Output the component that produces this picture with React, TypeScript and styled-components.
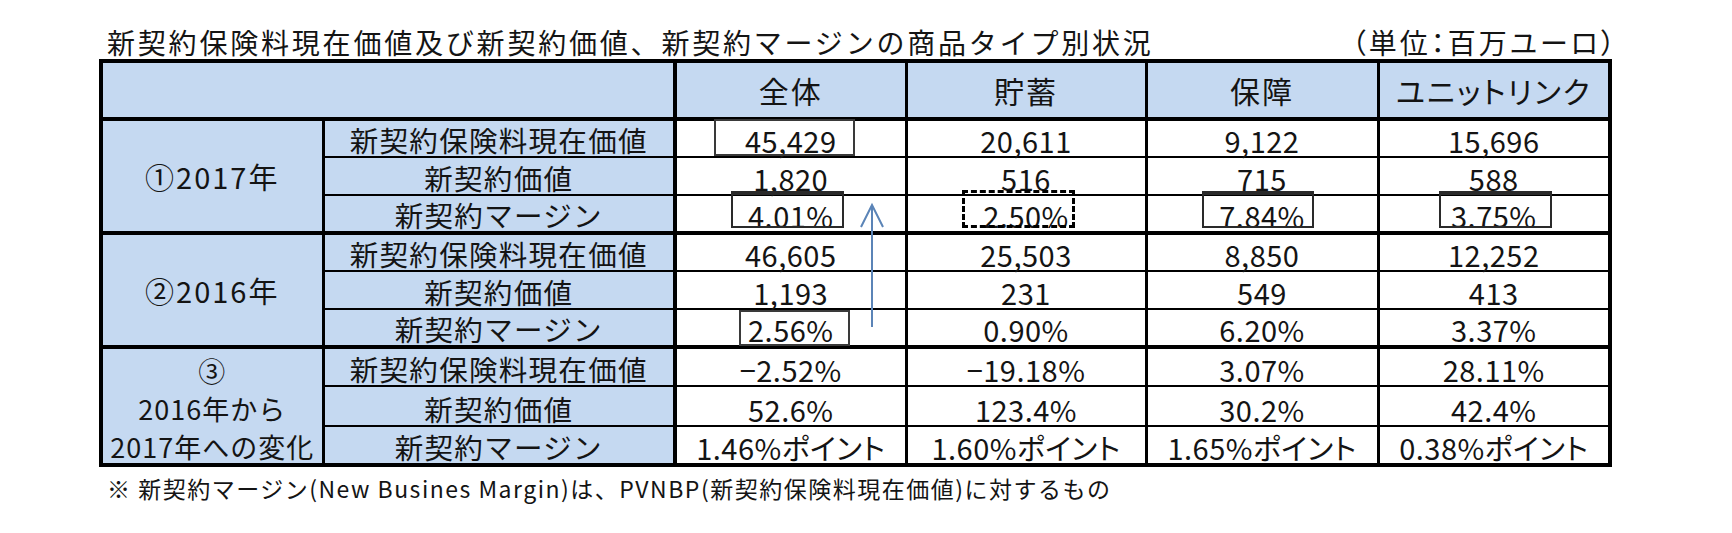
import React from 'react';
import styled, { createGlobalStyle, css } from 'styled-components';

const Global = createGlobalStyle`
  html, body { margin: 0; padding: 0; background: #ffffff; }
  body {
    font-family: "Noto Sans CJK JP", "Noto Sans", sans-serif;
    color: #141414;
  }
`;

const Page = styled.div`
  width: 1732px;
  height: 533px;
  box-sizing: border-box;
  padding: 26px 0 0 99px;
`;

const Sheet = styled.div`
  width: 1513px;
  display: flex;
  flex-direction: column;
`;

const TitleRow = styled.div`
  display: flex;
  justify-content: space-between;
  align-items: flex-end;
  height: 33px;
  padding: 0 0 0 8px;
  margin-right: -6px;
  font-size: 28px;
  line-height: 34px;
  letter-spacing: 2.8px;
  white-space: nowrap;
`;

const Unit = styled.span`
  letter-spacing: 3px;
  font-feature-settings: "palt";
`;

const TableWrap = styled.div`
  position: relative;
`;

const Table = styled.table`
  width: 1513px;
  border-collapse: collapse;
  table-layout: fixed;
  border: 4px solid #000;
`;

const blue = '#c5d9f1';

const HeadCell = styled.th<{ $thick?: boolean }>`
  background: ${blue};
  font-weight: 400;
  font-size: 30px;
  letter-spacing: 2px;
  font-feature-settings: "palt";
  height: 54px;
  padding: 0;
  text-align: center;
  vertical-align: middle;
  border: 3px solid #000;
  border-bottom-width: 4px;
  ${(p) => p.$thick && css`border-right-width: 4px;`}
  white-space: nowrap;
`;

const BodyRow = styled.tr<{ $groupStart?: boolean }>`
  height: 38px;
  & > td {
    border-top: ${(p) => (p.$groupStart ? '4px' : '2px')} solid #000;
  }
`;

const GroupCell = styled.td`
  background: ${blue};
  border-right: 3px solid #000;
  text-align: center;
  vertical-align: middle;
  font-size: 29px;
  letter-spacing: 2px;
  line-height: 34px;
  padding: 0;
  white-space: nowrap;
`;

const GroupLines = styled.div`
  display: grid;
  grid-auto-rows: 38px;
  align-items: end;
  font-size: 27px;
  letter-spacing: 1px;
  line-height: 32px;
`;

const LabelCell = styled.td`
  background: ${blue};
  border-right: 4px solid #000;
  border-bottom: 2px solid #000;
  text-align: center;
  vertical-align: bottom;
  font-size: 28.5px;
  letter-spacing: 1.3px;
  line-height: 32px;
  padding: 0;
  white-space: nowrap;
`;

const DataCell = styled.td`
  background: #fff;
  border-left: 3px solid #000;
  border-right: 3px solid #000;
  border-bottom: 2px solid #000;
  text-align: center;
  vertical-align: bottom;
  font-size: 29px;
  letter-spacing: 0.5px;
  font-feature-settings: "palt";
  line-height: 32px;
  padding: 0;
  white-space: nowrap;
`;

const Annotation = styled.div<{ $kind: 'thin' | 'topThick' | 'dashed' }>`
  position: absolute;
  box-sizing: border-box;
  pointer-events: none;
  ${(p) =>
    p.$kind === 'thin' &&
    css`
      border: 2px solid #3a3a3a;
    `}
  ${(p) =>
    p.$kind === 'topThick' &&
    css`
      border: 2px solid #2a2a2a;
      border-top-width: 4px;
    `}
  ${(p) =>
    p.$kind === 'dashed' &&
    css`
      border: 3px dashed #000;
    `}
`;

const ArrowSvg = styled.svg`
  position: absolute;
  left: 761px;
  top: 143px;
  overflow: visible;
`;

const Note = styled.div`
  margin-top: 7px;
  padding-left: 8px;
  font-size: 23px;
  line-height: 28px;
  letter-spacing: 1.5px;
  white-space: nowrap;
`;

type Group = { label: React.ReactNode; rows: string[][] };

const groups: Group[] = [
  {
    label: '①2017年',
    rows: [
      ['新契約保険料現在価値', '45,429', '20,611', '9,122', '15,696'],
      ['新契約価値', '1,820', '516', '715', '588'],
      ['新契約マージン', '4.01%', '2.50%', '7.84%', '3.75%'],
    ],
  },
  {
    label: '②2016年',
    rows: [
      ['新契約保険料現在価値', '46,605', '25,503', '8,850', '12,252'],
      ['新契約価値', '1,193', '231', '549', '413'],
      ['新契約マージン', '2.56%', '0.90%', '6.20%', '3.37%'],
    ],
  },
  {
    label: (
      <GroupLines>
        <span>③</span>
        <span>2016年から</span>
        <span>2017年への変化</span>
      </GroupLines>
    ),
    rows: [
      ['新契約保険料現在価値', '−2.52%', '−19.18%', '3.07%', '28.11%'],
      ['新契約価値', '52.6%', '123.4%', '30.2%', '42.4%'],
      ['新契約マージン', '1.46%ポイント', '1.60%ポイント', '1.65%ポイント', '0.38%ポイント'],
    ],
  },
];

const boxes: { x: number; y: number; w: number; h: number; kind: 'thin' | 'topThick' | 'dashed' }[] = [
  { x: 615, y: 60, w: 141, h: 37, kind: 'thin' },
  { x: 632, y: 132, w: 113, h: 37, kind: 'topThick' },
  { x: 863, y: 131, w: 113, h: 38, kind: 'dashed' },
  { x: 1103, y: 132, w: 112, h: 37, kind: 'topThick' },
  { x: 1340, y: 132, w: 113, h: 37, kind: 'topThick' },
  { x: 640, y: 251, w: 111, h: 36, kind: 'thin' },
];

export default function App() {
  return (
    <>
      <Global />
      <Page>
        <Sheet>
          <TitleRow>
            <span>新契約保険料現在価値及び新契約価値、新契約マージンの商品タイプ別状況</span>
            <Unit>（単位：百万ユーロ）</Unit>
          </TitleRow>
          <TableWrap>
            <Table>
              <colgroup>
                <col style={{ width: 222 }} />
                <col style={{ width: 352 }} />
                <col style={{ width: 231 }} />
                <col style={{ width: 240 }} />
                <col style={{ width: 232 }} />
                <col style={{ width: 232 }} />
              </colgroup>
              <thead>
                <tr>
                  <HeadCell colSpan={2} $thick />
                  <HeadCell>全体</HeadCell>
                  <HeadCell>貯蓄</HeadCell>
                  <HeadCell>保障</HeadCell>
                  <HeadCell>ユニットリンク</HeadCell>
                </tr>
              </thead>
              <tbody>
                {groups.map((g, gi) =>
                  g.rows.map((r, ri) => (
                    <BodyRow key={`${gi}-${ri}`} $groupStart={ri === 0}>
                      {ri === 0 && <GroupCell rowSpan={3}>{g.label}</GroupCell>}
                      <LabelCell>{r[0]}</LabelCell>
                      {r.slice(1).map((v, vi) => (
                        <DataCell key={vi}>{v}</DataCell>
                      ))}
                    </BodyRow>
                  ))
                )}
              </tbody>
            </Table>
            {boxes.map((b, i) => (
              <Annotation
                key={i}
                $kind={b.kind}
                style={{ left: b.x, top: b.y, width: b.w, height: b.h }}
              />
            ))}
            <ArrowSvg width="24" height="126" viewBox="0 0 24 126">
              <line x1="12" y1="3" x2="12" y2="125" stroke="#5b84b7" strokeWidth="2" />
              <polyline points="1,25 12,3 23,25" fill="none" stroke="#5b84b7" strokeWidth="2" />
            </ArrowSvg>
          </TableWrap>
          <Note>※ 新契約マージン(New Busines Margin)は、PVNBP(新契約保険料現在価値)に対するもの</Note>
        </Sheet>
      </Page>
    </>
  );
}
